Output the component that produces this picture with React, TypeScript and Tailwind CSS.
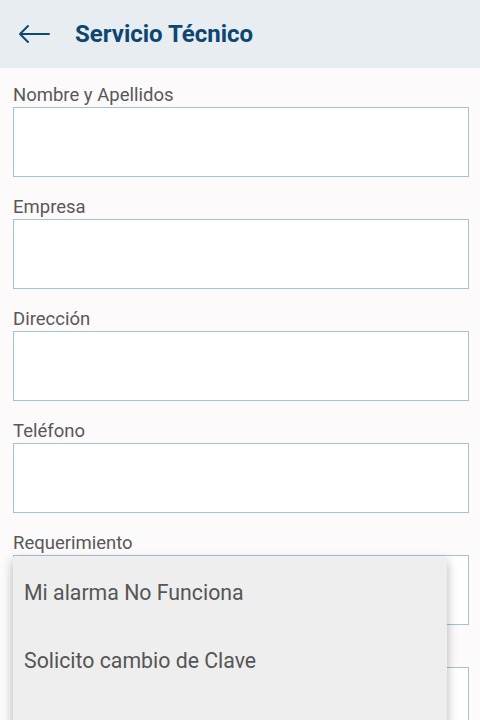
import React from 'react';

const fields = ['Nombre y Apellidos', 'Empresa', 'Dirección', 'Teléfono', 'Requerimiento', ''];

const options = ['Mi alarma No Funciona', 'Solicito cambio de Clave', 'Otros'];

export default function App() {
  return (
    <div className="relative w-[480px] h-[720px] overflow-hidden bg-[#fcfafb] font-['Roboto',sans-serif]">
      {/* Header */}
      <header className="flex items-center h-[68px] bg-[#e8edf2] px-[18px]">
        <svg width="32" height="20" viewBox="0 0 32 20" fill="none" className="text-[#0e4a70]">
          <path d="M31 10H2M10 2L2 10l8 8" stroke="currentColor" strokeWidth="2" strokeLinecap="round" strokeLinejoin="round" />
        </svg>
        <h1 className="ml-[25px] text-[24px] font-bold text-[#0d4670]">Servicio Técnico</h1>
      </header>

      {/* Form */}
      <div className="flex flex-col pl-[13px] pr-[11px] pt-[16px]">
        {fields.map((label, i) => (
          <div key={i} className="flex flex-col mb-[19px]">
            <label className="h-[23px] text-[18.5px] leading-[23px] text-[#585858]">{label}</label>
            <div className="h-[70px] bg-white border border-[#a3c2d3]" />
          </div>
        ))}
      </div>

      {/* Dropdown menu */}
      <div className="absolute left-[13px] top-[557px] w-[434px] pt-[2px] bg-[#eeeeee] shadow-[0_4px_10px_rgba(0,0,0,0.3)]">
        {options.map(opt => (
          <div key={opt} className="flex items-center h-[68px] px-[11px] text-[21.3px] text-[#555555]">
            {opt}
          </div>
        ))}
      </div>
    </div>
  );
}
